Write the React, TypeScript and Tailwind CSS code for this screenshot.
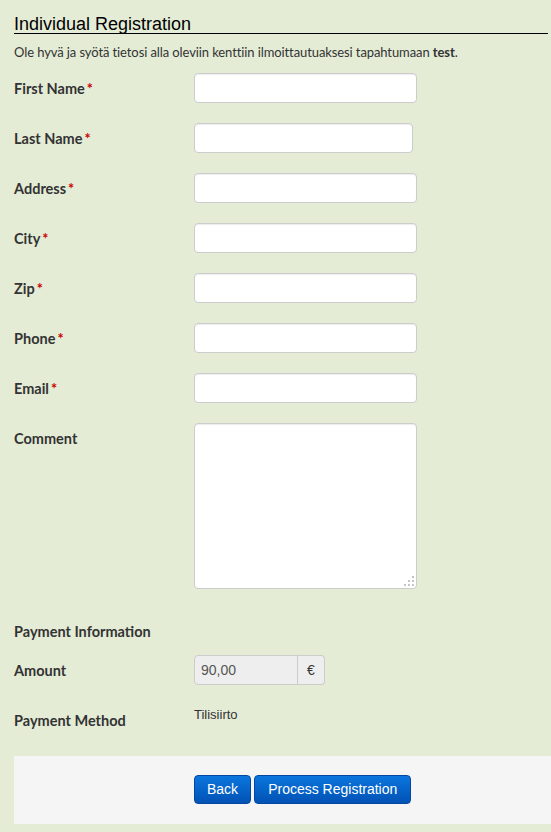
import React from 'react';

const fields = [
  { label: 'First Name', width: 'w-[223px]' },
  { label: 'Last Name', width: 'w-[219px]' },
  { label: 'Address', width: 'w-[223px]' },
  { label: 'City', width: 'w-[223px]' },
  { label: 'Zip', width: 'w-[223px]' },
  { label: 'Phone', width: 'w-[223px]' },
  { label: 'Email', width: 'w-[223px]' },
];

const labelClass = "w-[180px] shrink-0 font-['Lato',sans-serif] font-bold text-[14.5px] leading-[20px] text-[#333]";
const inputClass = 'h-[30px] rounded-[4px] border border-[#ccc] bg-white px-[6px] shadow-[inset_0_1px_1px_rgba(0,0,0,0.075)] outline-none';

function ResizeGrip() {
  return (
    <svg className="pointer-events-none absolute right-[2px] bottom-[2px]" width="12" height="12" viewBox="0 0 12 12">
      <rect x="9" y="1" width="2" height="2" fill="#c4c4c4" />
      <rect x="5" y="5" width="2" height="2" fill="#c4c4c4" />
      <rect x="9" y="5" width="2" height="2" fill="#c4c4c4" />
      <rect x="1" y="9" width="2" height="2" fill="#c4c4c4" />
      <rect x="5" y="9" width="2" height="2" fill="#c4c4c4" />
      <rect x="9" y="9" width="2" height="2" fill="#c4c4c4" />
    </svg>
  );
}

function App() {
  return (
    <div className="min-h-screen bg-[#e4ecd6] pl-[14px] pb-[8px]">
      <h2 className="mr-[3px] border-b border-black pt-[16px] font-['Liberation_Sans',Arial,sans-serif] text-[18px] leading-[17px] text-black">
        Individual Registration
      </h2>
      <p className="mt-[9px] mb-[12px] font-['Lato',sans-serif] text-[13px] leading-[18px] text-[#333] tracking-[-0.1px]">
        Ole hyvä ja syötä tietosi alla oleviin kenttiin ilmoittautuaksesi tapahtumaan <b>test</b>.
      </p>

      {fields.map((f) => (
        <div key={f.label} className="mb-[20px] flex">
          <label className={labelClass + ' pt-[6px]'}>
            {f.label}
            <span className="ml-[2px] text-[#c00]">*</span>
          </label>
          <input type="text" className={inputClass + ' ' + f.width} />
        </div>
      ))}

      <div className="mb-[20px] flex">
        <label className={labelClass + ' pt-[6px]'}>Comment</label>
        <div className="relative">
          <textarea className="block h-[166px] w-[223px] resize-none rounded-[4px] border border-[#ccc] bg-white p-[6px] shadow-[inset_0_1px_1px_rgba(0,0,0,0.075)] outline-none" />
          <ResizeGrip />
        </div>
      </div>

      <div className={labelClass + ' pt-[13px] mb-[13px]'}>Payment Information</div>

      <div className="mb-[20px] flex">
        <label className={labelClass + ' pt-[6px]'}>Amount</label>
        <div className="flex h-[30px] font-['Liberation_Sans',Arial,sans-serif] text-[14px] text-[#555]">
          <div className="flex w-[104px] items-center rounded-l-[4px] border border-[#ccc] bg-[#eee] px-[6px]">90,00</div>
          <div className="flex w-[27px] items-center justify-center rounded-r-[4px] border border-l-0 border-[#ccc] bg-[#eee] text-[#333]">€</div>
        </div>
      </div>

      <div className="mb-[21px] flex h-[30px]">
        <label className={labelClass + ' pt-[6px]'}>Payment Method</label>
        <div className="font-['Liberation_Sans',Arial,sans-serif] text-[13px] leading-[20px] text-[#333]">Tilisiirto</div>
      </div>

      <div className="flex gap-[3px] bg-[#f5f5f5] pt-[19px] pb-[20px] pl-[180px]">
        <button className="h-[29px] rounded-[4px] border border-[#0447a0] bg-gradient-to-b from-[#0b76de] to-[#0352b5] px-[12px] font-['Liberation_Sans',Arial,sans-serif] text-[14px] text-white">
          Back
        </button>
        <button className="h-[29px] rounded-[4px] border border-[#0447a0] bg-gradient-to-b from-[#0b76de] to-[#0352b5] px-[13px] font-['Liberation_Sans',Arial,sans-serif] text-[14px] text-white">
          Process Registration
        </button>
      </div>
    </div>
  );
}

export default App;
